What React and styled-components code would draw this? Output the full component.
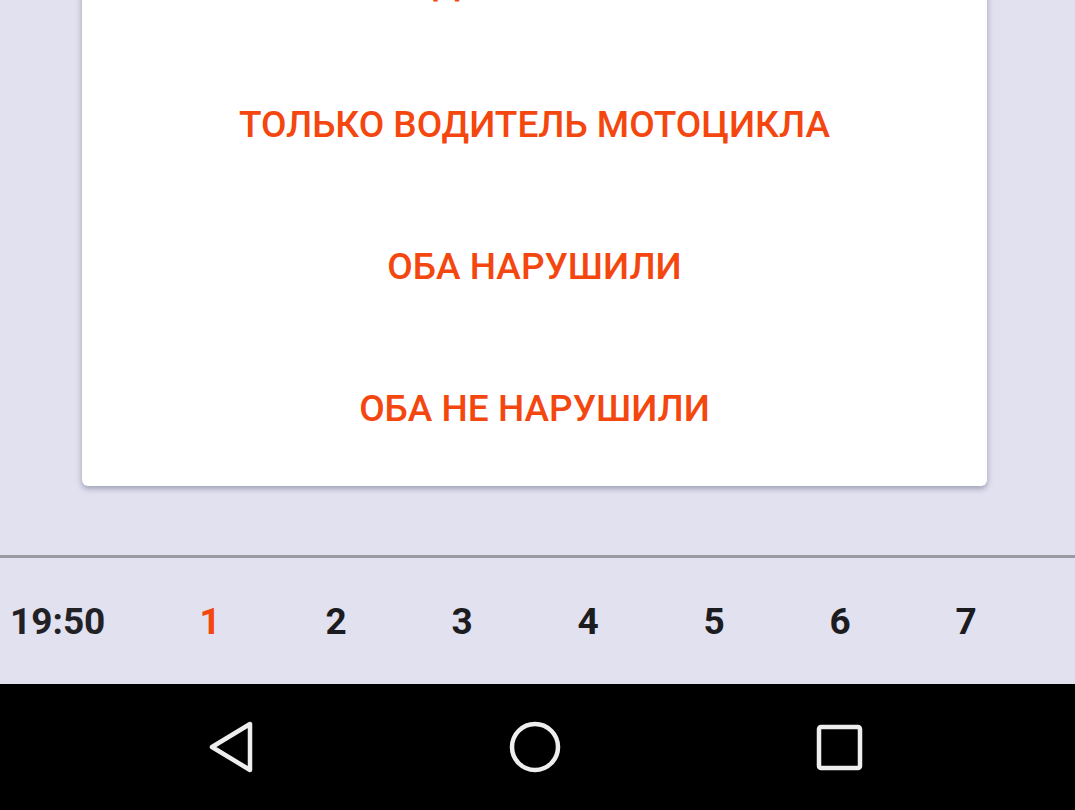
import React from "react";
import styled, { createGlobalStyle } from "styled-components";

const Global = createGlobalStyle`
  html, body { margin: 0; padding: 0; background: #e1e1f0; }
  body { font-family: Roboto, "Noto Sans", "Liberation Sans", sans-serif; }
  #root { width: 1075px; height: 810px; }
`;

const Screen = styled.div`
  width: 1075px;
  height: 810px;
  display: flex;
  flex-direction: column;
  background: #e1e1f0;
  overflow: hidden;
`;

const Scroller = styled.div`
  height: 555px;
  overflow: hidden;
  padding: 0 88px 0 82px;
  box-sizing: border-box;
`;

const Card = styled.div`
  margin-top: -89px;
  background: #ffffff;
  border-radius: 6px;
  box-shadow: 0 3px 5px rgba(60, 60, 90, 0.3), 0 1px 10px rgba(60, 60, 90, 0.12);
  padding: 0 0 7px;
  display: flex;
  flex-direction: column;
`;

const Option = styled.button`
  height: 142px;
  border: 0;
  background: transparent;
  display: flex;
  align-items: center;
  justify-content: center;
  font-family: Roboto, "Noto Sans", sans-serif;
  font-weight: 500;
  font-size: 37px;
  letter-spacing: 0;
  color: #f4470f;
  text-transform: uppercase;
  padding: 0;
`;

const Divider = styled.div`
  height: 3px;
  background: #9a9aa2;
`;

const Tabs = styled.div`
  height: 126px;
  display: flex;
  align-items: center;
  background: #e1e1f0;
`;

const Time = styled.div`
  width: 147px;
  padding-left: 10px;
  box-sizing: border-box;
  font-family: Roboto, sans-serif;
  font-weight: 700;
  font-size: 37px;
  color: #222226;
`;

const Num = styled.div`
  width: 126px;
  flex: none;
  text-align: center;
  font-family: Roboto, sans-serif;
  font-weight: 700;
  font-size: 37px;
  color: ${(p) => (p.$active ? "#f4470f" : "#1c1c20")};
`;

const NavBar = styled.div`
  flex: 1;
  background: #000;
  display: flex;
  align-items: center;
  justify-content: space-between;
  padding: 0 212px 0 206px;
`;

const NavIcon = styled.svg`
  width: 56px;
  height: 56px;
  display: block;
`;

export default function App() {
  const options = [
    "Только водитель автомобиля",
    "Только водитель мотоцикла",
    "Оба нарушили",
    "Оба не нарушили",
  ];
  return (
    <>
      <Global />
      <Screen>
        <Scroller>
          <Card>
            {options.map((o) => (
              <Option key={o}>{o}</Option>
            ))}
          </Card>
        </Scroller>
        <Divider />
        <Tabs>
          <Time>19:50</Time>
          {[1, 2, 3, 4, 5, 6, 7].map((n) => (
            <Num key={n} $active={n === 1}>
              {n}
            </Num>
          ))}
        </Tabs>
        <NavBar>
          <NavIcon viewBox="0 0 56 56">
            <path
              d="M44 5 L44 51 L6 28 Z"
              fill="none"
              stroke="#eeeeee"
              strokeWidth="4.5"
              strokeLinejoin="round"
            />
          </NavIcon>
          <NavIcon viewBox="0 0 56 56">
            <circle cx="28" cy="28" r="23" fill="none" stroke="#eeeeee" strokeWidth="4.5" />
          </NavIcon>
          <NavIcon viewBox="0 0 56 56">
            <rect x="12" y="8" width="41" height="41" rx="2" fill="none" stroke="#eeeeee" strokeWidth="4.5" />
          </NavIcon>
        </NavBar>
      </Screen>
    </>
  );
}
